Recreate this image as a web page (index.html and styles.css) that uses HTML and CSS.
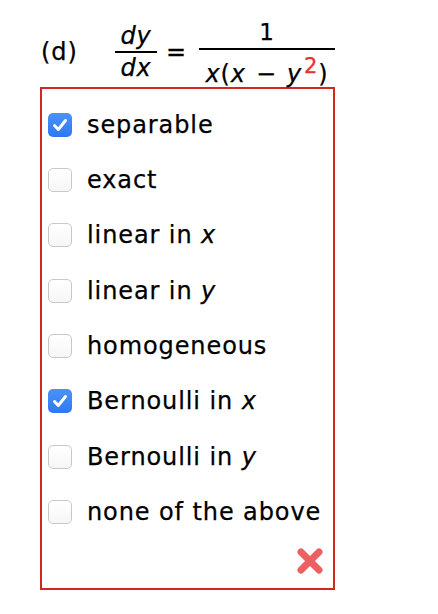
FILE: index.html
```html
<!DOCTYPE html>
<html>
<head>
<meta charset="utf-8">
<link rel="stylesheet" href="styles.css">
</head>
<body>
<div class="page">
  <div class="question">
    <span class="label">(d)</span>
    <span class="frac f1">
      <span class="num"><i>dy</i></span>
      <span class="den"><i>dx</i></span>
    </span>
    <span class="eq">=</span>
    <span class="frac f2">
      <span class="num">1</span>
      <span class="den"><i>x</i>(<i>x</i><span class="op">&minus;</span><i>y</i><span class="red">2</span>)</span>
    </span>
  </div>
  <div class="answers">
    <div class="row"><span class="cb on"><svg viewBox="0 0 24 24" width="24" height="24"><path d="M6.5 12.5 L10.3 16.5 L17.5 7.5" fill="none" stroke="#fff" stroke-width="3" stroke-linecap="round" stroke-linejoin="round"/></svg></span><span class="txt">separable</span></div>
    <div class="row"><span class="cb"></span><span class="txt">exact</span></div>
    <div class="row"><span class="cb"></span><span class="txt">linear in <i>x</i></span></div>
    <div class="row"><span class="cb"></span><span class="txt">linear in <i>y</i></span></div>
    <div class="row"><span class="cb"></span><span class="txt">homogeneous</span></div>
    <div class="row"><span class="cb on"><svg viewBox="0 0 24 24" width="24" height="24"><path d="M6.5 12.5 L10.3 16.5 L17.5 7.5" fill="none" stroke="#fff" stroke-width="3" stroke-linecap="round" stroke-linejoin="round"/></svg></span><span class="txt">Bernoulli in <i>x</i></span></div>
    <div class="row"><span class="cb"></span><span class="txt">Bernoulli in <i>y</i></span></div>
    <div class="row"><span class="cb"></span><span class="txt">none of the above</span></div>
    <div class="mark">
      <svg viewBox="0 0 30 30" width="30" height="30"><path d="M6 6 L24 24 M24 6 L6 24" stroke="#ea4f52" stroke-width="7" stroke-linecap="round" opacity="0.9"/></svg>
    </div>
  </div>
</div>
</body>
</html>
```
FILE: styles.css
```css
html, body { margin: 0; padding: 0; background: #fff; }
body { font-family: "DejaVu Sans", Verdana, sans-serif; font-size: 24px; letter-spacing: 0.9px; color: #000; -webkit-text-stroke: 0.25px #000; }
.page { padding: 17px 0 0 40px; width: 295px; }
.question { display: flex; align-items: center; height: 70px; line-height: 28px; }
.label { margin-left: 1px; width: 74px; }
.frac { display: inline-flex; flex-direction: column; align-items: center; }
.frac .num { padding: 0 2px 1px; }
.frac .den { border-top: 2px solid #000; padding: 1px 2px 0; align-self: stretch; text-align: center; white-space: nowrap; }
.f1 { width: 42px; }
.f2 { width: 136px; margin-top: 4px; }
.f2 .num { font-size: 23px; padding-bottom: 2px; margin-top: -2px; }
.f2 .den { padding-top: 10px; }
.op { margin: 0 10px; }
.eq { margin: 0 12px 0 9px; }
.red { color: #e8302a; -webkit-text-stroke: 0.25px #e8302a; font-size: 21px; position: relative; top: -9px; margin-left: 2px; }
.answers { border: 2px solid #d0281d; height: 503px; display: flex; flex-direction: column; padding: 8px 0 0 6px; box-sizing: border-box; }
.row { display: flex; align-items: center; height: 55.35px; flex: none; }
.cb { width: 24px; height: 24px; border: 1px solid #c8c8c8; border-radius: 5px; background: linear-gradient(#fff, #f6f6f6); box-sizing: border-box; flex: none; display: flex; align-items: center; justify-content: center; }
.cb.on { border: none; background: linear-gradient(#4b92f8, #2e79f2); }
.cb svg { -webkit-text-stroke: 0; }
.txt { margin-left: 15px; }
.mark { display: flex; justify-content: flex-end; padding: 6px 8px 0 0; }
```
